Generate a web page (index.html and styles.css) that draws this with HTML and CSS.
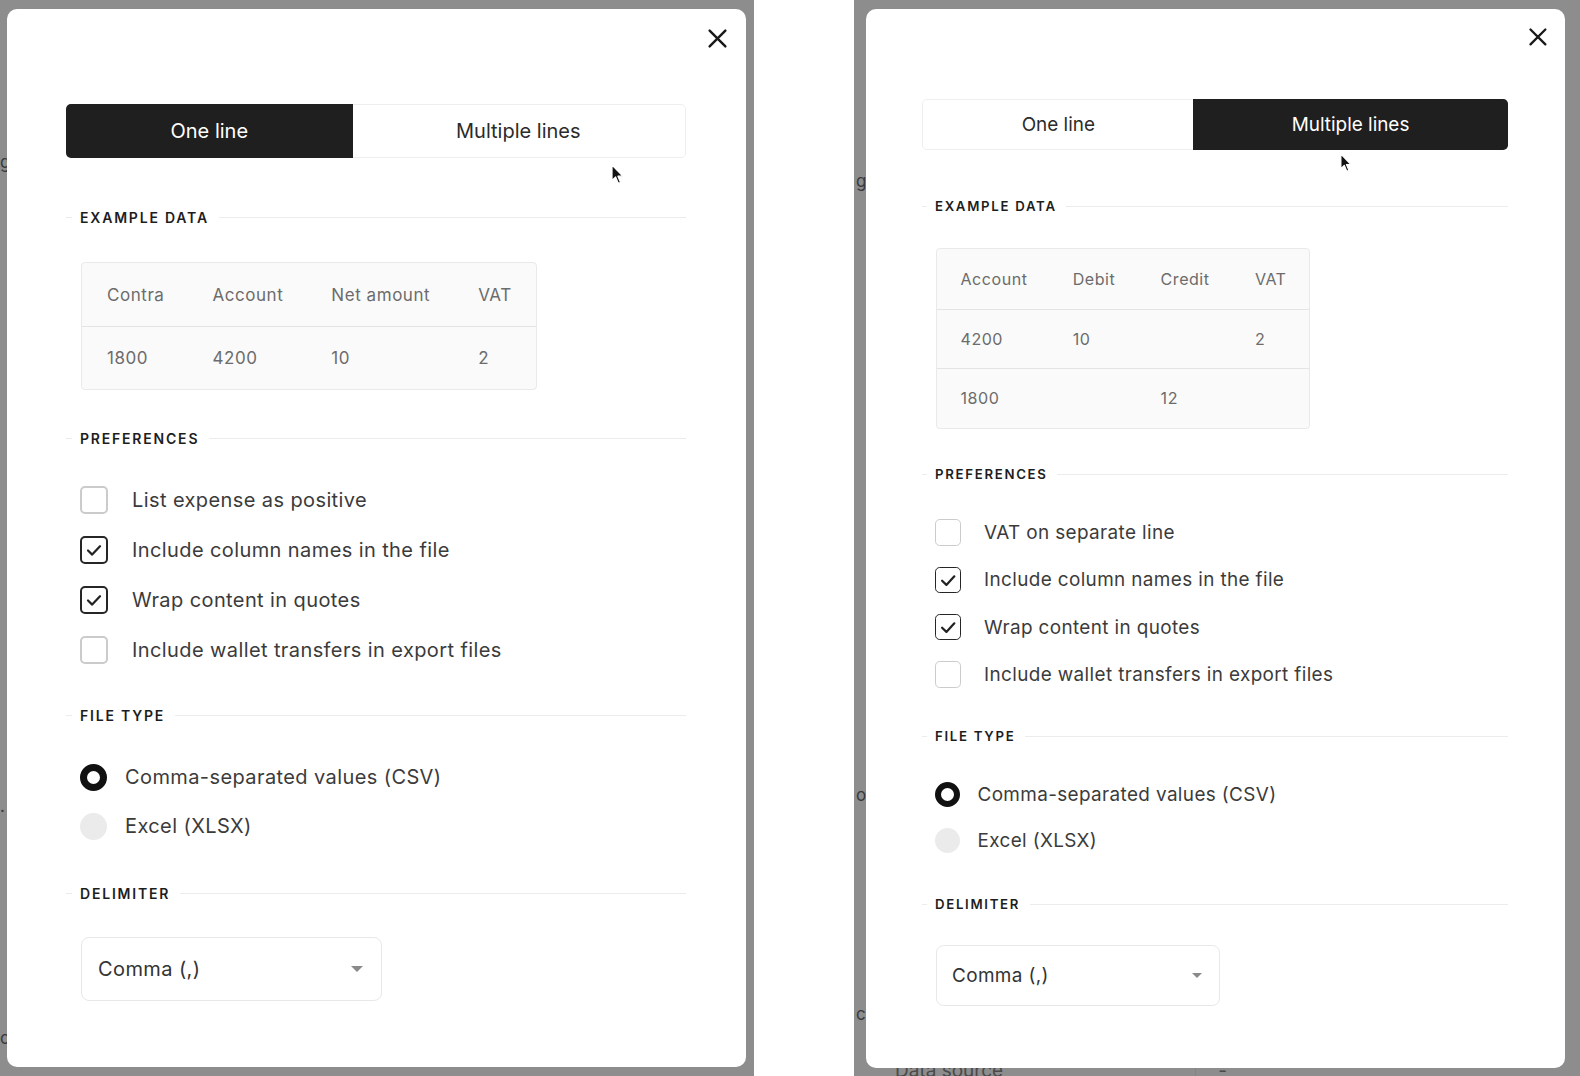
FILE: index.html
```html
<!DOCTYPE html>
<html lang="en">
<head>
    <meta charset="UTF-8">
    <meta name="viewport" content="width=device-width, initial-scale=1.0">
    <title>Export settings</title>
    <link rel="stylesheet" href="styles.css">
</head>
<body>
<div class="screens">

    <!-- one line export -->
    <section class="backdrop backdrop-left">
        <div class="page">
            <div></div>
            <div class="peek">g</div>
            <div></div>
            <div class="peek">.</div>
            <div></div>
            <div class="peek">c</div>
        </div>

        <div class="modal">
            <div class="modal-inner">
                <div class="modal-head">
                    <button class="close" aria-label="Close">
                        <svg width="21" height="21" viewBox="0 0 24 24"><path d="M3 3L21 21M21 3L3 21" stroke="#1a1a1a" stroke-width="2.8" stroke-linecap="round"/></svg>
                    </button>
                </div>

                <div class="segmented">
                    <button class="seg active">One line</button>
                    <button class="seg">Multiple lines</button>
                </div>

                <div class="section section-example">
                    <h3 class="section-title">Example data</h3>
                    <div class="section-body">
                        <table class="example">
                            <tr><th>Contra</th><th>Account</th><th>Net amount</th><th>VAT</th></tr>
                            <tr><td>1800</td><td>4200</td><td>10</td><td>2</td></tr>
                        </table>
                    </div>
                </div>

                <div class="section section-prefs">
                    <h3 class="section-title">Preferences</h3>
                    <ul class="section-body options">
                        <li class="option"><span class="box"></span>List expense as positive</li>
                        <li class="option"><span class="box checked"><svg viewBox="0 0 24 24"><path d="M6 12.5L10.2 16.6L18 8.2" fill="none" stroke="#222" stroke-width="2.2" stroke-linecap="round" stroke-linejoin="round"/></svg></span>Include column names in the file</li>
                        <li class="option"><span class="box checked"><svg viewBox="0 0 24 24"><path d="M6 12.5L10.2 16.6L18 8.2" fill="none" stroke="#222" stroke-width="2.2" stroke-linecap="round" stroke-linejoin="round"/></svg></span>Wrap content in quotes</li>
                        <li class="option"><span class="box"></span>Include wallet transfers in export files</li>
                    </ul>
                </div>

                <div class="section section-type">
                    <h3 class="section-title">File type</h3>
                    <ul class="section-body options radios">
                        <li class="option"><span class="radio checked"></span>Comma-separated values (CSV)</li>
                        <li class="option"><span class="radio"></span>Excel (XLSX)</li>
                    </ul>
                </div>

                <div class="section section-delim">
                    <h3 class="section-title">Delimiter</h3>
                    <div class="section-body">
                        <div class="select">Comma (,)<span class="caret"></span></div>
                    </div>
                </div>
            </div>
        </div>

        <svg class="cursor cursor-left" width="13" height="21" viewBox="0 0 13 21"><path d="M1 1V16.5L4.6 13L7.4 19.4L9.6 18.4L6.9 12.2H11.8Z" fill="#111" stroke="#fff" stroke-width="1.2" stroke-linejoin="round"/></svg>
    </section>

    <!-- multiple lines export -->
    <section class="backdrop backdrop-right">
        <div class="page">
            <div></div>
            <div class="peek">g</div>
            <div></div>
            <div class="peek">o.</div>
            <div></div>
            <div class="peek">c</div>
            <div></div>
            <div class="page-row"><span class="page-label">Data source</span><span class="page-value">-</span></div>
        </div>

        <div class="modal">
            <div class="modal-inner">
                <div class="modal-head">
                    <button class="close" aria-label="Close">
                        <svg width="21" height="21" viewBox="0 0 24 24"><path d="M3 3L21 21M21 3L3 21" stroke="#1a1a1a" stroke-width="2.8" stroke-linecap="round"/></svg>
                    </button>
                </div>

                <div class="segmented">
                    <button class="seg">One line</button>
                    <button class="seg active">Multiple lines</button>
                </div>

                <div class="section section-example">
                    <h3 class="section-title">Example data</h3>
                    <div class="section-body">
                        <table class="example">
                            <tr><th>Account</th><th>Debit</th><th>Credit</th><th>VAT</th></tr>
                            <tr><td>4200</td><td>10</td><td></td><td>2</td></tr>
                            <tr><td>1800</td><td></td><td>12</td><td></td></tr>
                        </table>
                    </div>
                </div>

                <div class="section section-prefs">
                    <h3 class="section-title">Preferences</h3>
                    <ul class="section-body options">
                        <li class="option"><span class="box"></span>VAT on separate line</li>
                        <li class="option"><span class="box checked"><svg viewBox="0 0 24 24"><path d="M6 12.5L10.2 16.6L18 8.2" fill="none" stroke="#222" stroke-width="2.2" stroke-linecap="round" stroke-linejoin="round"/></svg></span>Include column names in the file</li>
                        <li class="option"><span class="box checked"><svg viewBox="0 0 24 24"><path d="M6 12.5L10.2 16.6L18 8.2" fill="none" stroke="#222" stroke-width="2.2" stroke-linecap="round" stroke-linejoin="round"/></svg></span>Wrap content in quotes</li>
                        <li class="option"><span class="box"></span>Include wallet transfers in export files</li>
                    </ul>
                </div>

                <div class="section section-type">
                    <h3 class="section-title">File type</h3>
                    <ul class="section-body options radios">
                        <li class="option"><span class="radio checked"></span>Comma-separated values (CSV)</li>
                        <li class="option"><span class="radio"></span>Excel (XLSX)</li>
                    </ul>
                </div>

                <div class="section section-delim">
                    <h3 class="section-title">Delimiter</h3>
                    <div class="section-body">
                        <div class="select">Comma (,)<span class="caret"></span></div>
                    </div>
                </div>
            </div>
        </div>

        <svg class="cursor cursor-right" width="12" height="20" viewBox="0 0 13 21"><path d="M1 1V16.5L4.6 13L7.4 19.4L9.6 18.4L6.9 12.2H11.8Z" fill="#111" stroke="#fff" stroke-width="1.2" stroke-linejoin="round"/></svg>
    </section>

</div>
</body>
</html>
```

FILE: styles.css
```css
* {
    box-sizing: border-box;
}
body {
    margin: 0;
    background-color: #ffffff;
    font-family: Inter, "Noto Sans", sans-serif;
    color: #333333;
}
.screens {
    display: flex;
    gap: 100px;
    height: 1076px;
}

/* dimmed page behind the dialog */
.backdrop {
    position: relative;
    background-color: #8d8d8d;
    overflow: hidden;
}
.backdrop-left {
    width: 754px;
}
.backdrop-right {
    flex: 1;
}
.page {
    display: grid;
    font-size: 17px;
    color: #3a3a3a;
}
.backdrop-left .page {
    grid-template-rows: 150px 24px 620px 24px 208px 24px;
}
.backdrop-right .page {
    grid-template-rows: 169px 24px 590px 24px 195px 24px 32px 24px;
}
.peek {
    display: flex;
    align-items: center;
    white-space: nowrap;
}
.backdrop-right .peek {
    padding-left: 2px;
}
.page-row {
    display: flex;
    align-items: center;
    padding-left: 41px;
    font-size: 19px;
    color: #4a4a4a;
}
.page-value {
    margin-left: 192px;
    padding-left: 22px;
    border-left: 1px solid #858585;
}

/* dialog */
.modal {
    position: absolute;
    background-color: #ffffff;
    border-radius: 10px;
    overflow: hidden;
}
.backdrop-left .modal {
    top: 9px;
    left: 7px;
    right: 8px;
    bottom: 9px;
}
.backdrop-right .modal {
    top: 9px;
    left: 12px;
    right: 15px;
    bottom: 8px;
}
.modal-inner {
    padding: 19px 60px 0 59px;
}
.backdrop-right .modal-inner {
    zoom: 0.945;
}
.modal-head {
    display: flex;
    justify-content: flex-end;
    margin-right: -42px;
}
.close {
    display: flex;
    padding: 0;
    border: none;
    background: none;
    cursor: pointer;
}

/* one line / multiple lines */
.segmented {
    display: flex;
    height: 54px;
    margin-top: 55px;
    border: 1px solid #eeeeee;
    border-radius: 5px;
}
.seg {
    flex: 1 1 auto;
    padding: 0;
    border: none;
    background: none;
    font-family: inherit;
    font-size: 20px;
    color: #2b2b2b;
    cursor: pointer;
}
.seg.active {
    margin: -1px;
    background-color: #1f1f1f;
    color: #ffffff;
}
.seg.active:first-child {
    border-radius: 5px 0 0 5px;
}
.seg.active:last-child {
    border-radius: 0 5px 5px 0;
}

/* sections */
.section {
    margin-top: 43px;
}
.section-title {
    display: flex;
    align-items: center;
    margin: 0 0 39px;
    font-size: 14px;
    line-height: 17px;
    font-weight: 600;
    letter-spacing: 1.8px;
    text-transform: uppercase;
    color: #1d1d1d;
}
.section-title::before {
    content: "";
    width: 6px;
    height: 1px;
    margin-right: 8px;
    background-color: #ececec;
}
.section-title::after {
    content: "";
    flex: 1;
    height: 1px;
    margin-left: 10px;
    background-color: #ececec;
}
.section-example {
    margin-top: 51px;
}
.section-example .section-title {
    margin-bottom: 36px;
}
.section-prefs {
    margin-top: 40px;
}
.section-delim {
    margin-top: 45px;
}
.section-delim .section-title {
    margin-bottom: 35px;
}
.section-body {
    padding-left: 14px;
}

/* example table */
.example {
    border-collapse: separate;
    border-spacing: 0;
    margin-left: 1px;
    background-color: #fafafa;
    border: 1px solid #e9e9e9;
    border-radius: 4px;
    font-size: 17px;
    letter-spacing: 0.55px;
    color: #6c6c6c;
}
.example th,
.example td {
    height: 63px;
    padding: 0 24px;
    text-align: left;
    font-weight: 400;
}
.example th:first-child,
.example td:first-child {
    padding-left: 25px;
}
.example tr + tr > * {
    border-top: 1px solid #e4e4e4;
}

/* checkboxes and radios */
.options {
    display: flex;
    flex-direction: column;
    gap: 22px;
    margin: 0;
    list-style: none;
}
.option {
    display: flex;
    align-items: center;
    gap: 24px;
    height: 28px;
    font-size: 20px;
    letter-spacing: 0.4px;
    color: #3b3b3b;
}
.box {
    flex: none;
    display: flex;
    width: 28px;
    height: 28px;
    border: 2px solid #cbcbcb;
    border-radius: 5px;
}
.box.checked {
    border-color: #262626;
}
.box svg {
    width: 100%;
    height: 100%;
}
.radios {
    gap: 21px;
}
.radios .option {
    gap: 18px;
}
.radio {
    flex: none;
    width: 27px;
    height: 27px;
    border-radius: 50%;
    background-color: #ebebeb;
}
.radio.checked {
    background-color: #ffffff;
    border: 7px solid #111111;
}

/* delimiter select */
.select {
    display: flex;
    align-items: center;
    justify-content: space-between;
    width: 301px;
    height: 64px;
    margin-left: 1px;
    padding: 0 18px 0 16px;
    border: 1px solid #e8e8e8;
    border-radius: 8px;
    font-size: 20px;
    letter-spacing: 0.4px;
    color: #333333;
}
.caret {
    border-top: 6px solid #8a8a8a;
    border-left: 6px solid transparent;
    border-right: 6px solid transparent;
}

/* mouse pointer in the screenshot */
.cursor {
    position: absolute;
}
.cursor-left {
    top: 164px;
    left: 611px;
}
.cursor-right {
    top: 153px;
    left: 486px;
}
```
